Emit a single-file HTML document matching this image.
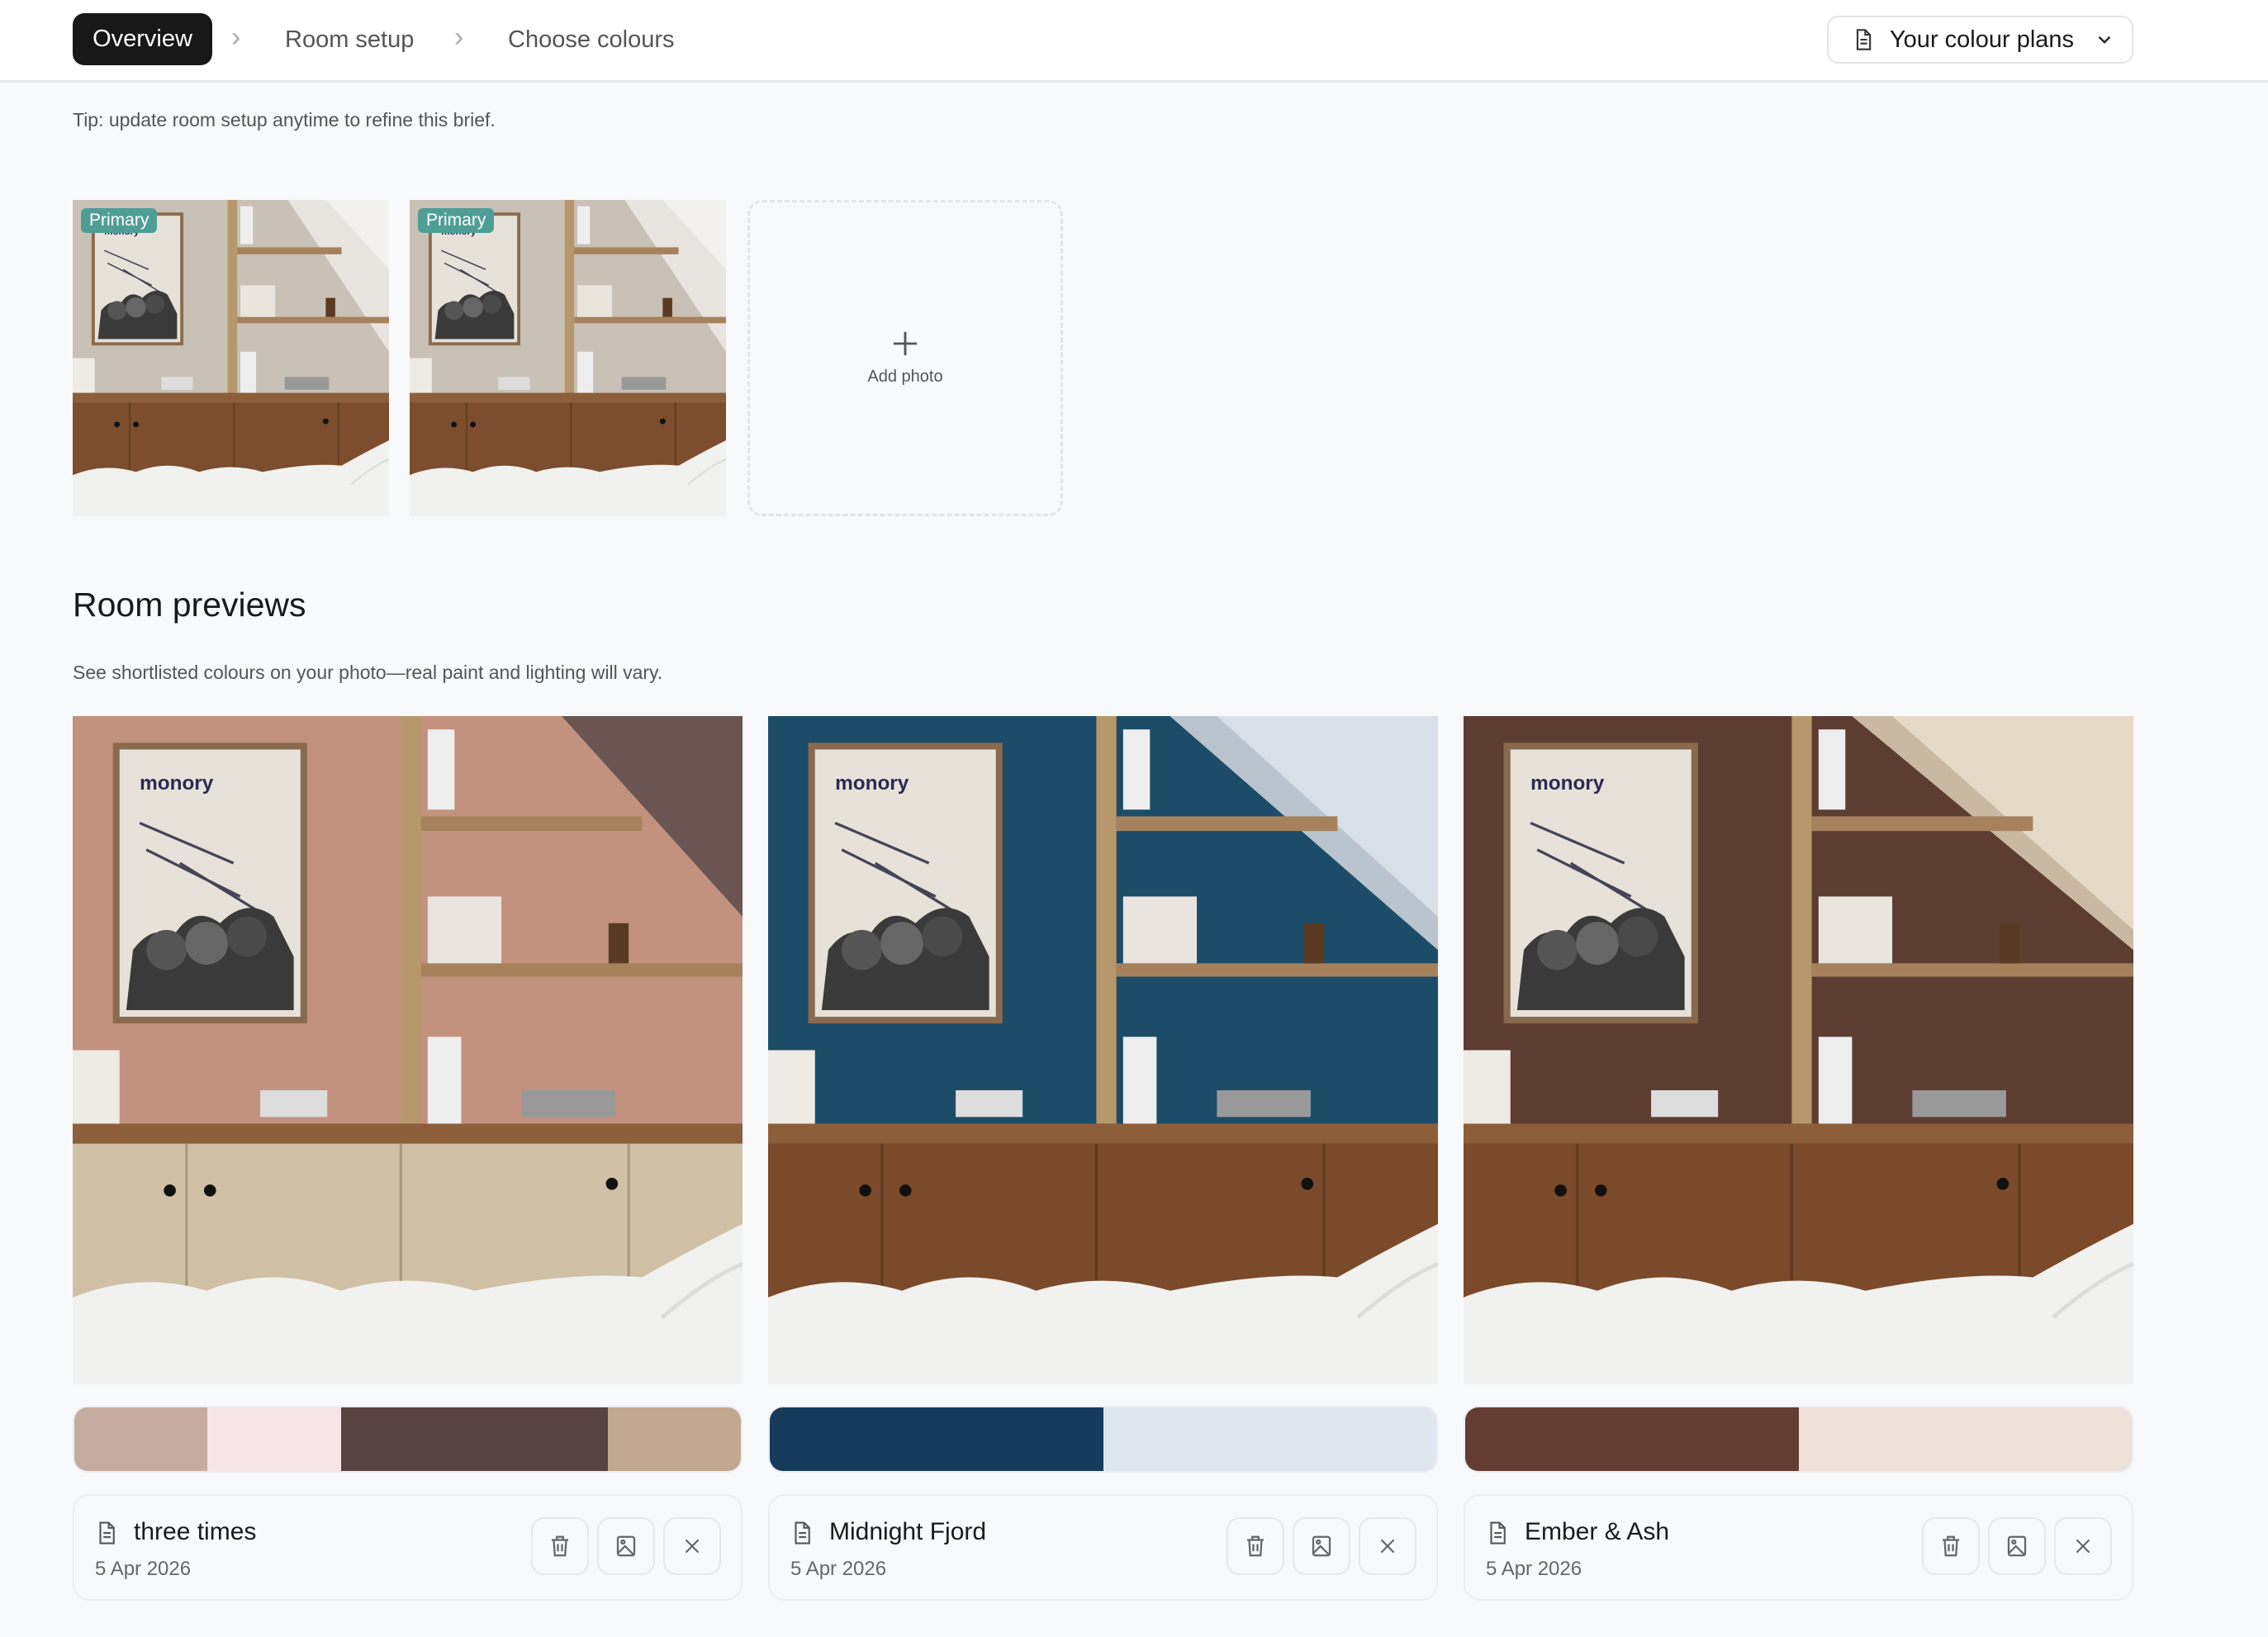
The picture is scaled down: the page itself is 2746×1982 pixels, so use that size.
<!DOCTYPE html>
<html><head><meta charset="utf-8"><style>
*{box-sizing:border-box;margin:0;padding:0}
body{width:2746px;height:1982px;background:#f8f9fb;font-family:"Liberation Sans",sans-serif;color:#1a1a1a;position:relative;overflow:hidden}
.hdr{position:absolute;left:0;top:0;width:2746px;height:100px;background:#fff;border-bottom:3px solid #e6e7ea}
.pill{position:absolute;left:88px;top:16px;width:169px;height:63px;background:#181818;color:#fff;border-radius:14px;font-size:29px;display:flex;align-items:center;justify-content:center}
.crumb{position:absolute;top:32px;font-size:29px;color:#555}
.chev{position:absolute;top:26px;font-size:34px;color:#aaa}
.plans{position:absolute;left:2212px;top:19px;width:371px;height:58px;border:2px solid #e3e4e7;border-radius:14px;background:#fff;font-size:29px;display:flex;align-items:center;padding-left:28px;gap:18px}
.t{position:absolute;font-size:23px;color:#555}
.ph{position:absolute;top:242px;width:383px;height:383px;overflow:hidden}
.badge{position:absolute;left:10px;top:10px;background:#4f9e96;color:#fff;font-size:21px;padding:3px 10px;border-radius:6px}
.add{position:absolute;left:905px;top:242px;width:382px;height:383px;border:3px dashed #e4e5e8;border-radius:18px;display:flex;flex-direction:column;align-items:center;justify-content:center;color:#555;font-size:20px}
.big{position:absolute;top:867px;width:811px;height:809px;overflow:hidden}
.sw{position:absolute;top:1702px;width:811px;height:81px;border-radius:18px;overflow:hidden;display:flex;border:2px solid #eceef1}
.card{position:absolute;top:1809px;width:811px;height:129px;border:2px solid #eceef1;border-radius:20px}
.card .ti{position:absolute;left:72px;top:27px;font-size:30px;color:#1a1a1a}
.card .di{position:absolute;left:24px;top:28px}
.card .dt{position:absolute;left:25px;top:75px;font-size:24px;color:#666}
.btns{position:absolute;right:24px;top:26px;display:flex;gap:10px}
.b{width:70px;height:70px;border:2px solid #e8e9ec;border-radius:16px;display:flex;align-items:center;justify-content:center}
svg.scene{display:block;width:100%;height:100%}
</style></head><body>
<div class="hdr">
<div class="pill">Overview</div>
<div class="chev" style="left:280px">›</div>
<div class="crumb" style="left:345px">Room setup</div>
<div class="chev" style="left:550px">›</div>
<div class="crumb" style="left:615px">Choose colours</div>
<div class="plans"><svg width="28" height="30" viewBox="0 0 24 24" fill="none" stroke="#333" stroke-width="1.8"><path d="M6 2h8l5 5v15H6z"/><path d="M14 2v5h5M9 12h7M9 16h7"/></svg>Your colour plans<svg width="26" height="26" viewBox="0 0 24 24" fill="none" stroke="#222" stroke-width="2.2" style="margin-left:6px"><path d="M6 9l6 6 6-6"/></svg></div>
</div>
<div class="t" style="left:88px;top:132px">Tip: update room setup anytime to refine this brief.</div>

<svg width="0" height="0" style="position:absolute"><defs>
<g id="base">
<rect x="6" y="4" width="29" height="42" fill="#8a6a4e"/>
<rect x="7" y="5" width="27" height="40" fill="#e6e2da"/>
<text x="10" y="11" font-size="3" font-weight="bold" fill="#2a2a50" font-family="Liberation Sans">monory</text>
<path d="M10 16l14 6M11 20l14 7M16 22l13 8" stroke="#445" stroke-width=".4"/>
<path d="M8 44 L9 35 Q12 31 15 33 Q18 28 22 31 Q26 27 30 30 L33 36 L33 44Z" fill="#3a3a3a"/>
<circle cx="14" cy="35" r="3" fill="#555"/><circle cx="20" cy="34" r="3.2" fill="#666"/><circle cx="26" cy="33" r="3" fill="#4a4a4a"/>
<rect x="49" y="0" width="3" height="63" fill="#b7976c"/>
<rect x="52" y="15" width="33" height="2.2" fill="#a6825c"/>
<rect x="52" y="37" width="48" height="2" fill="#a6825c"/>
<rect x="53" y="2" width="4" height="12" fill="#eee"/>
<rect x="53" y="27" width="11" height="10" fill="#e9e4de"/>
<rect x="80" y="31" width="3" height="6" fill="#5a3a22"/>
<rect x="53" y="48" width="5" height="14" fill="#eee"/>
<rect x="0" y="50" width="7" height="11" fill="#eeeae4"/>
<rect x="28" y="56" width="10" height="4" fill="#ddd"/>
<rect x="67" y="56" width="14" height="4" fill="#999"/>
<rect x="0" y="61" width="100" height="3" fill="#8c5e3a"/>
</g>
<g id="bed"><path d="M0 87 Q10 83 20 86 Q30 82 40 86 Q50 83 60 86 Q75 83 85 84 Q92 80 100 76 L100 100 L0 100Z" fill="#f1f1f0"/><path d="M88 90 Q95 84 100 82" stroke="#ddd" stroke-width=".6" fill="none"/></g>
</defs></svg>

<div class="ph" style="left:88px"><svg class="scene" viewBox="0 0 100 100" preserveAspectRatio="none"><rect width="100" height="100" fill="#c9c0b6"/><path d="M68 0 L100 0 L100 48Z" fill="#e8e4df"/><path d="M80 0 L100 0 L100 22Z" fill="#f3f1ee"/><use href="#base"/><rect x="0" y="64" width="100" height="24" fill="#7c4d2e"/><path d="M18 64v24M51 64v24M84 64v24" stroke="#5e3a20" stroke-width=".4"/><circle cx="14" cy="71" r=".9" fill="#111"/><circle cx="20" cy="71" r=".9" fill="#111"/><circle cx="80" cy="70" r=".9" fill="#111"/><use href="#bed"/></svg><div class="badge">Primary</div></div>
<div class="ph" style="left:496px"><svg class="scene" viewBox="0 0 100 100" preserveAspectRatio="none"><rect width="100" height="100" fill="#c9c0b6"/><path d="M68 0 L100 0 L100 48Z" fill="#e8e4df"/><path d="M80 0 L100 0 L100 22Z" fill="#f3f1ee"/><use href="#base"/><rect x="0" y="64" width="100" height="24" fill="#7c4d2e"/><path d="M18 64v24M51 64v24M84 64v24" stroke="#5e3a20" stroke-width=".4"/><circle cx="14" cy="71" r=".9" fill="#111"/><circle cx="20" cy="71" r=".9" fill="#111"/><circle cx="80" cy="70" r=".9" fill="#111"/><use href="#bed"/></svg><div class="badge">Primary</div></div>
<div class="add"><svg width="34" height="34" viewBox="0 0 24 24" stroke="#555" stroke-width="2"><path d="M12 2v20M2 12h20"/></svg><div style="margin-top:12px">Add photo</div></div>

<div style="position:absolute;left:88px;top:709px;font-size:41px;color:#1a1a1a">Room previews</div>
<div class="t" style="left:88px;top:801px">See shortlisted colours on your photo—real paint and lighting will vary.</div>

<div class="big" style="left:88px"><svg class="scene" viewBox="0 0 100 100" preserveAspectRatio="none"><rect width="100" height="100" fill="#c3927f"/><path d="M73 0 L100 0 L100 30Z" fill="#6a5552"/><use href="#base"/><rect x="0" y="64" width="100" height="24" fill="#cfc0a6"/><path d="M17 64v24M49 64v24M83 64v24" stroke="#a89a82" stroke-width=".4"/><circle cx="14.5" cy="71" r=".9" fill="#111"/><circle cx="20.5" cy="71" r=".9" fill="#111"/><circle cx="80.5" cy="70" r=".9" fill="#111"/><use href="#bed"/></svg></div>
<div class="big" style="left:930px"><svg class="scene" viewBox="0 0 100 100" preserveAspectRatio="none"><rect width="100" height="100" fill="#1d4c68"/><path d="M60 0 L100 0 L100 35Z" fill="#d9dfe6"/><path d="M60 0 L67 0 L100 30 L100 35Z" fill="#b9c4cf"/><use href="#base"/><rect x="0" y="64" width="100" height="24" fill="#7a4a2a"/><path d="M17 64v24M49 64v24M83 64v24" stroke="#5e3a20" stroke-width=".4"/><circle cx="14.5" cy="71" r=".9" fill="#111"/><circle cx="20.5" cy="71" r=".9" fill="#111"/><circle cx="80.5" cy="70" r=".9" fill="#111"/><use href="#bed"/></svg></div>
<div class="big" style="left:1772px"><svg class="scene" viewBox="0 0 100 100" preserveAspectRatio="none"><rect width="100" height="100" fill="#5d3c32"/><path d="M58 0 L100 0 L100 35Z" fill="#e5dac8"/><path d="M58 0 L64 0 L100 32 L100 35Z" fill="#c9b9a2"/><use href="#base"/><rect x="0" y="64" width="100" height="24" fill="#7a4a2a"/><path d="M17 64v24M49 64v24M83 64v24" stroke="#5e3a20" stroke-width=".4"/><circle cx="14.5" cy="71" r=".9" fill="#111"/><circle cx="20.5" cy="71" r=".9" fill="#111"/><circle cx="80.5" cy="70" r=".9" fill="#111"/><use href="#bed"/></svg></div>

<div class="sw" style="left:88px"><div style="flex:1;background:#c4aca0"></div><div style="flex:1;background:#f7e4e9"></div><div style="flex:2;background:#574341"></div><div style="flex:1;background:#c2a88e"></div></div>
<div class="sw" style="left:930px"><div style="flex:1;background:#173b5c"></div><div style="flex:1;background:#e0e6ee"></div></div>
<div class="sw" style="left:1772px"><div style="flex:1;background:#633d33"></div><div style="flex:1;background:#ece2d8"></div></div>

<div class="card" style="left:88px"><svg class="di" width="30" height="34" viewBox="0 0 24 24" fill="none" stroke="#555" stroke-width="1.7"><path d="M6 2h8l5 5v15H6z"/><path d="M14 2v5h5M9 12h7M9 16h7"/></svg><div class="ti">three times</div><div class="dt">5 Apr 2026</div>
<div class="btns"><div class="b"><svg width="30" height="30" viewBox="0 0 24 24" fill="none" stroke="#666" stroke-width="1.8"><path d="M4 6h16M9 6V3h6v3M6 6l1 15h10l1-15M10 10v7M14 10v7"/></svg></div><div class="b"><svg width="30" height="30" viewBox="0 0 24 24" fill="none" stroke="#666" stroke-width="1.8"><rect x="4" y="3" width="16" height="18" rx="2"/><circle cx="9" cy="8" r="1.6"/><path d="M4 19l7-7 9 9"/></svg></div><div class="b"><svg width="26" height="26" viewBox="0 0 24 24" stroke="#666" stroke-width="2"><path d="M5 5l14 14M19 5L5 19"/></svg></div></div></div>
<div class="card" style="left:930px"><svg class="di" width="30" height="34" viewBox="0 0 24 24" fill="none" stroke="#555" stroke-width="1.7"><path d="M6 2h8l5 5v15H6z"/><path d="M14 2v5h5M9 12h7M9 16h7"/></svg><div class="ti">Midnight Fjord</div><div class="dt">5 Apr 2026</div>
<div class="btns"><div class="b"><svg width="30" height="30" viewBox="0 0 24 24" fill="none" stroke="#666" stroke-width="1.8"><path d="M4 6h16M9 6V3h6v3M6 6l1 15h10l1-15M10 10v7M14 10v7"/></svg></div><div class="b"><svg width="30" height="30" viewBox="0 0 24 24" fill="none" stroke="#666" stroke-width="1.8"><rect x="4" y="3" width="16" height="18" rx="2"/><circle cx="9" cy="8" r="1.6"/><path d="M4 19l7-7 9 9"/></svg></div><div class="b"><svg width="26" height="26" viewBox="0 0 24 24" stroke="#666" stroke-width="2"><path d="M5 5l14 14M19 5L5 19"/></svg></div></div></div>
<div class="card" style="left:1772px"><svg class="di" width="30" height="34" viewBox="0 0 24 24" fill="none" stroke="#555" stroke-width="1.7"><path d="M6 2h8l5 5v15H6z"/><path d="M14 2v5h5M9 12h7M9 16h7"/></svg><div class="ti">Ember &amp; Ash</div><div class="dt">5 Apr 2026</div>
<div class="btns"><div class="b"><svg width="30" height="30" viewBox="0 0 24 24" fill="none" stroke="#666" stroke-width="1.8"><path d="M4 6h16M9 6V3h6v3M6 6l1 15h10l1-15M10 10v7M14 10v7"/></svg></div><div class="b"><svg width="30" height="30" viewBox="0 0 24 24" fill="none" stroke="#666" stroke-width="1.8"><rect x="4" y="3" width="16" height="18" rx="2"/><circle cx="9" cy="8" r="1.6"/><path d="M4 19l7-7 9 9"/></svg></div><div class="b"><svg width="26" height="26" viewBox="0 0 24 24" stroke="#666" stroke-width="2"><path d="M5 5l14 14M19 5L5 19"/></svg></div></div></div>
</body></html>
